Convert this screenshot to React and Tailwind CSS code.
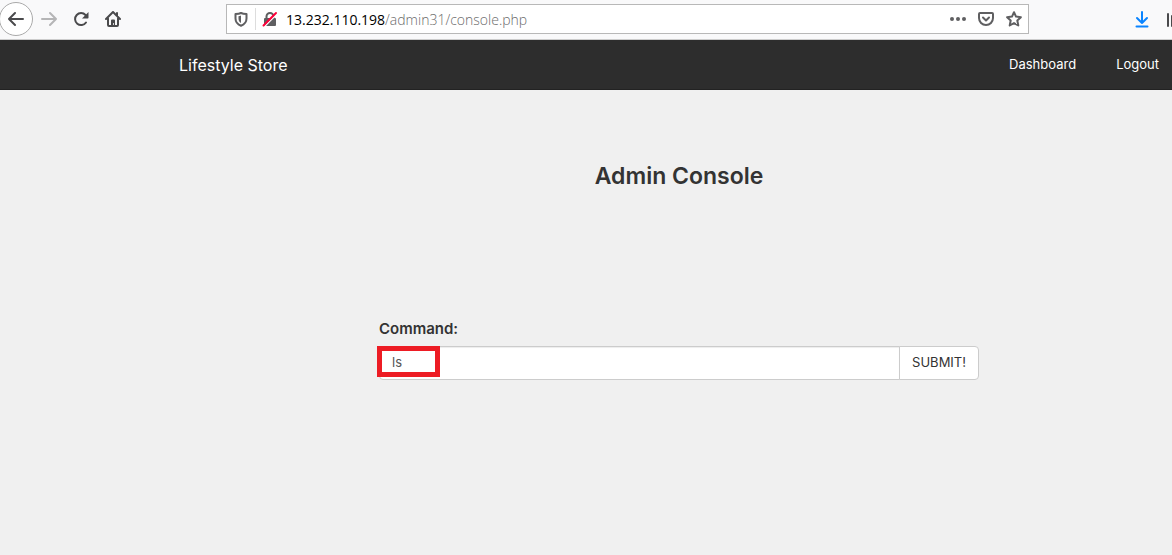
import React from "react";

const stroke = {
  fill: "none",
  stroke: "currentColor",
  strokeWidth: 2,
  strokeLinecap: "round",
  strokeLinejoin: "round",
};

function ArrowIcon({ flip }) {
  return (
    <svg width="16" height="16" viewBox="0 0 16 16" {...stroke} aria-hidden="true">
      <path d={flip ? "M1 8h14M9 2l6 6-6 6" : "M15 8H1M7 2L1 8l6 6"} />
    </svg>
  );
}

function ReloadIcon() {
  return (
    <svg width="16" height="16" viewBox="0 0 16 16" aria-hidden="true">
      <path d="M13 11.500A6 6 0 1 1 12.500 4" {...stroke} />
      <path d="M15.500 1v5.700a.8.8 0 0 1-.8.8H9z" fill="currentColor" />
    </svg>
  );
}

function HomeIcon() {
  return (
    <svg width="16" height="16" viewBox="0 0 16 16" aria-hidden="true">
      <path d="M1 8l7-7 7 7M3 7.500V14a1 1 0 0 0 1 1h8a1 1 0 0 0 1-1V7.500M12 2v3" {...stroke} />
      <path d="M6 14V9.500a1 1 0 0 1 1-1h2a1 1 0 0 1 1 1V14H8.800v-2H8v2z" fill="currentColor" />
    </svg>
  );
}

function ShieldIcon() {
  return (
    <svg width="14" height="16" viewBox="0 0 14 16" aria-hidden="true">
      <path d="M7 2C5.500 2.800 3.500 3 1.500 3v4.500c0 3.500 2 5.800 5.500 7.200 3.500-1.400 5.500-3.700 5.500-7.200V3C10.500 3 8.500 2.800 7 2z" {...stroke} />
      <path d="M7 4.500C6.200 4.900 5.300 5.100 4.500 5.200v2.300c0 2.200.9 3.500 2.500 4.500z" fill="currentColor" />
    </svg>
  );
}

function InsecureIcon() {
  return (
    <svg width="16" height="16" viewBox="0 0 16 16" aria-hidden="true">
      <path d="M4.500 7V5.500a3.500 3.500 0 0 1 7 0V7" {...stroke} />
      <rect x="2" y="7" width="12" height="8" rx="1" fill="currentColor" />
      <path d="M2 16L15.500 2.500" stroke="#ffffff" strokeWidth="1.500" />
      <path d="M1.500 14.500L14 2" stroke="#ff0039" strokeWidth="2" strokeLinecap="round" />
    </svg>
  );
}

function DotsIcon() {
  return (
    <svg width="16" height="16" viewBox="0 0 16 16" fill="currentColor" aria-hidden="true">
      <circle cx="2" cy="8" r="2" />
      <circle cx="8" cy="8" r="2" />
      <circle cx="14" cy="8" r="2" />
    </svg>
  );
}

function PocketIcon() {
  return (
    <svg width="16" height="16" viewBox="0 0 16 16" {...stroke} aria-hidden="true">
      <path d="M2 2h12a1 1 0 0 1 1 1v4a7 7 0 0 1-14 0V3a1 1 0 0 1 1-1z" />
      <path d="M5 6.500l3 3 3-3" />
    </svg>
  );
}

function StarIcon() {
  return (
    <svg width="16" height="16" viewBox="0 0 16 16" {...stroke} aria-hidden="true">
      <path d="M8 1.200l2 4.400 4.900.6-3.600 3.300 1 5L8 12.100l-4.300 2.400 1-5L1.100 6.200 6 5.600z" />
    </svg>
  );
}

function DownloadIcon() {
  return (
    <svg width="14" height="17" viewBox="0 0 14 17" {...stroke} aria-hidden="true">
      <path d="M7 1v11M2 7l5 5 5-5M1.500 15.500h11" />
    </svg>
  );
}

function LibraryIcon() {
  return (
    <svg width="16" height="16" viewBox="0 0 16 16" {...stroke} aria-hidden="true">
      <path d="M1 2v12M5 4v10M9 4v10M12 4l3 10" />
    </svg>
  );
}

function Toolbar() {
  return (
    <header className="flex h-10 items-start overflow-hidden border-b border-[#cccccc] bg-[#f9f9fa] text-[#4a4a4c]">
      <div className="flex shrink-0 items-center pt-[2px]">
        <button type="button" aria-label="Back" className="-ml-px flex size-[34px] items-center justify-center rounded-full border border-[#aaaaaa] bg-white">
          <ArrowIcon />
        </button>
        <button type="button" aria-label="Forward" disabled className="flex size-8 items-center justify-center text-[#b5b5b6]">
          <ArrowIcon flip />
        </button>
        <button type="button" aria-label="Reload" className="flex size-8 items-center justify-center">
          <ReloadIcon />
        </button>
        <button type="button" aria-label="Home" className="flex size-8 items-center justify-center">
          <HomeIcon />
        </button>
      </div>
      <div className="mt-1 ml-[97px] flex h-[30px] min-w-0 flex-1 items-center border border-[#b8b8b8] bg-white pl-[7px] text-[#5f5f61]">
        <button type="button" aria-label="Tracking protection"><ShieldIcon /></button>
        <span className="ml-[7px] h-[22px] w-px shrink-0 bg-[#dddddd]" />
        <button type="button" aria-label="Connection not secure" className="ml-1.5"><InsecureIcon /></button>
        <div className="ml-2 min-w-0 flex-1 truncate pt-0.5 font-['Open_Sans','Noto_Sans',sans-serif] text-sm font-light text-[#6b6b6b]">
          <span className="font-normal text-black">13.232.110.198</span>/admin31/console.php
        </div>
        <div className="flex shrink-0 items-center">
          <button type="button" aria-label="Page actions" className="flex size-7 items-center justify-center"><DotsIcon /></button>
          <button type="button" aria-label="Save to Pocket" className="flex size-7 items-center justify-center"><PocketIcon /></button>
          <button type="button" aria-label="Bookmark this page" className="flex size-7 items-center justify-center"><StarIcon /></button>
        </div>
      </div>
      <div className="-mr-[11px] ml-[106px] flex shrink-0 items-center gap-[18px] pt-[11px]">
        <button type="button" aria-label="Downloads" className="text-[#0a84ff]"><DownloadIcon /></button>
        <button type="button" aria-label="Library"><LibraryIcon /></button>
      </div>
    </header>
  );
}

export default function App() {
  return (
    <div className="min-h-screen overflow-x-hidden bg-[#f0f0f0] font-['Inter','Liberation_Sans',sans-serif] text-[#333333]">
      <Toolbar />
      <nav className="flex h-[50px] items-center justify-between border-b border-[#222222] bg-[#2d2d2d] pr-[13px] pl-[179px] text-white">
        <a href="#home" className="text-base">Lifestyle Store</a>
        <div className="flex gap-10 text-[13px]">
          <a href="#dashboard">Dashboard</a>
          <a href="#logout">Logout</a>
        </div>
      </nav>
      <main className="flex flex-col items-center pt-[70px] pl-[186px]">
        <h1 className="text-[23px] leading-8 font-semibold">Admin Console</h1>
        <form className="mt-[125px] w-full max-w-[600px]" onSubmit={(e) => e.preventDefault()}>
          <label htmlFor="command" className="block text-[15px] leading-6 font-semibold">Command:</label>
          <div className="relative mt-[5px] flex h-[34px]">
            <input
              id="command"
              type="text"
              defaultValue="ls"
              className="min-w-0 flex-1 rounded-l border border-[#cccccc] bg-white px-3 text-[13px] text-[#555555] shadow-[inset_0_1px_1px_rgba(0,0,0,0.075)] outline-none"
            />
            <button type="submit" className="-ml-px rounded-r border border-[#cccccc] bg-white px-3 text-[13px]">SUBMIT!</button>
            <span className="pointer-events-none absolute top-0 -left-0.5 h-[31px] w-[63px] border-5 border-[#ed1c24]" />
          </div>
        </form>
      </main>
    </div>
  );
}
